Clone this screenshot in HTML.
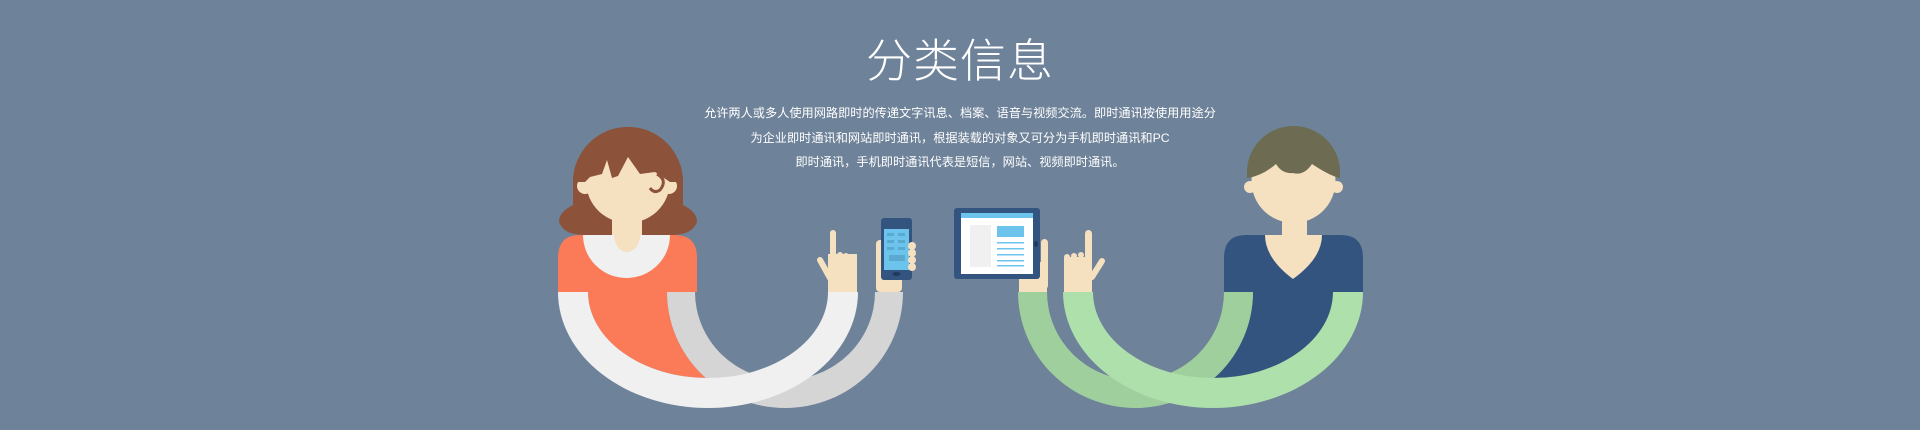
<!DOCTYPE html>
<html><head><meta charset="utf-8"><style>
html,body{margin:0;padding:0;background:#6e8299;width:1920px;height:430px;overflow:hidden}
svg{display:block}
</style></head><body>
<svg width="1920" height="430" viewBox="0 0 1920 430" xmlns="http://www.w3.org/2000/svg">
<rect width="1920" height="430" fill="#6e8299"/>
<text x="960" y="77" text-anchor="middle" font-family="'Noto Sans CJK SC',sans-serif" font-weight="300" font-size="46" fill="#fff" letter-spacing="1">分类信息</text>
<g font-family="'Liberation Sans','Noto Sans CJK SC',sans-serif" font-size="12.2" fill="#fff" text-anchor="middle">
<text x="960" y="117">允许两人或多人使用网路即时的传递文字讯息、档案、语音与视频交流。即时通讯按使用用途分</text>
<text x="960" y="142">为企业即时通讯和网站即时通讯，根据装载的对象又可分为手机即时通讯和PC</text>
<text x="960" y="166">即时通讯，手机即时通讯代表是短信，网站、视频即时通讯。</text>
</g>

<!-- WOMAN -->
<path d="M573,182 A55,55 0 0 1 683,182 L683,205 Q697,212 697,222 Q692,235 672,235 L584,235 Q564,235 559,222 Q559,212 573,205 Z" fill="#8c523a"/>
<rect x="612" y="210" width="30" height="35" fill="#f5e0bf"/>
<circle cx="585" cy="186" r="8" fill="#f5e0bf"/>
<circle cx="669" cy="186" r="8" fill="#f5e0bf"/>
<circle cx="628" cy="181" r="42" fill="#f5e0bf"/>
<path d="M573,182 A55,55 0 0 1 683,182 L670,182 L664,178 L655,172 L640,174 L628,157 L618,176 L612,178 L607,160 L602,174 L590,177 L585,182 Z" fill="#8c523a"/>
<path d="M657,174 Q668,180 660,190 Q654,194 650,188" fill="none" stroke="#8c523a" stroke-width="3"/>
<!-- torso -->
<path d="M558,292 L558,258 Q558,235 580,235 L675,235 Q697,235 697,258 L697,292 Z" fill="#fb7b58"/>
<path d="M558,292 L588,292 A120,86 0 0 0 706,378 A118,116 0 0 1 667,292 Z" fill="#fb7b58"/>
<path d="M583,235 A43.5,43 0 0 0 670,235 Z" fill="#f0f0f0"/>
<path d="M614,235 A13,17 0 0 0 640,235 Z" fill="#f5e0bf"/>
<!-- gray arm -->
<path d="M667,292 A118,116 0 0 0 903,292 L875,292 A90,88 0 0 1 695,292 Z" fill="#d5d5d5"/>
<!-- white arm -->
<path d="M558,292 A150,116 0 0 0 858,292 L828,292 A120,86 0 0 1 588,292 Z" fill="#f0f0f0"/>
<!-- hand pointing -->
<rect x="828" y="254" width="29" height="38" fill="#f5e0bf"/>
<rect x="830" y="230" width="6" height="40" rx="3" fill="#f5e0bf"/>
<circle cx="840" cy="255" r="3" fill="#f5e0bf"/><circle cx="846" cy="256" r="3" fill="#f5e0bf"/><circle cx="853" cy="257" r="3" fill="#f5e0bf"/>
<path d="M820,260 L830,278" stroke="#f5e0bf" stroke-width="6" stroke-linecap="round"/>
<!-- hand phone -->
<rect x="876" y="240" width="26" height="52" rx="4" fill="#f5e0bf"/>
<rect x="881" y="218" width="31" height="62" rx="3" fill="#32547f"/>
<rect x="884" y="229" width="25" height="41" fill="#6cc3ec"/>
<g fill="#59a9d0"><rect x="887" y="233" width="7" height="3"/><rect x="898" y="233" width="7" height="3"/><rect x="887" y="240" width="7" height="3"/><rect x="898" y="240" width="7" height="3"/><rect x="887" y="247" width="7" height="3"/><rect x="898" y="247" width="7" height="3"/><rect x="889" y="255" width="16" height="6"/></g>
<ellipse cx="896.5" cy="274" rx="4" ry="2" fill="#1f3a5c"/>
<g fill="#f5e0bf"><circle cx="912" cy="246" r="4"/><circle cx="912" cy="253" r="4"/><circle cx="912" cy="260" r="4"/><circle cx="912" cy="267" r="4"/></g>

<!-- MAN -->
<circle cx="1250" cy="187" r="6" fill="#f5e0bf"/>
<circle cx="1337" cy="187" r="6" fill="#f5e0bf"/>
<rect x="1282" y="210" width="25" height="30" fill="#f5e0bf"/>
<circle cx="1293.5" cy="181" r="42" fill="#f5e0bf"/>
<path d="M1247,178 L1247,172 A46.5,46 0 0 1 1340,172 L1340,178 Q1330,176 1312,164 Q1304,176 1293,173 Q1282,174 1276,164 Q1262,176 1247,178 Z" fill="#6d6b52"/>
<!-- torso -->
<path d="M1224,292 L1224,258 Q1224,235 1246,235 L1341,235 Q1363,235 1363,258 L1363,292 Z" fill="#32547f"/>
<path d="M1363,292 L1333,292 A120,86 0 0 1 1214,378 A117.5,116 0 0 0 1253,292 Z" fill="#32547f"/>
<path d="M1265,235 L1322,235 Q1322,258 1293,279 Q1265,258 1265,235 Z" fill="#f5e0bf"/>
<!-- back green arm -->
<path d="M1018,292 A117.5,116 0 0 0 1253,292 L1224,292 A88.5,88 0 0 1 1047,292 Z" fill="#a0cf9e"/>
<!-- front green arm -->
<path d="M1063,292 A150,116 0 0 0 1363,292 L1333,292 A120,86 0 0 1 1093,292 Z" fill="#aee0ac"/>
<!-- hand tablet -->
<rect x="1019" y="262" width="28" height="30" fill="#f5e0bf"/>
<rect x="1041" y="239" width="7" height="50" rx="3.5" fill="#f5e0bf"/>
<rect x="954" y="208" width="86" height="71" rx="3" fill="#32547f"/>
<rect x="961" y="213" width="72" height="61" fill="#fff"/>
<rect x="961" y="213" width="72" height="5" fill="#6cc3ec"/>
<rect x="970" y="225" width="21" height="42" fill="#f0f0f0"/>
<rect x="997" y="226" width="27" height="11" fill="#6cc3ec"/>
<g fill="#6cc3ec"><rect x="997" y="242" width="27" height="1.5"/><rect x="997" y="248" width="27" height="1.5"/><rect x="997" y="254" width="27" height="1.5"/><rect x="997" y="260" width="27" height="1.5"/><rect x="997" y="265" width="27" height="1.5"/></g>
<ellipse cx="1036" cy="244" rx="2" ry="3" fill="#1f3a5c"/>
<!-- pointing hand -->
<rect x="1064" y="257" width="28" height="35" fill="#f5e0bf"/>
<rect x="1085" y="230" width="7" height="40" rx="3.5" fill="#f5e0bf"/>
<circle cx="1067" cy="257" r="3" fill="#f5e0bf"/><circle cx="1074" cy="256" r="3" fill="#f5e0bf"/><circle cx="1081" cy="255" r="3" fill="#f5e0bf"/>
<path d="M1102,261 L1092,277" stroke="#f5e0bf" stroke-width="6" stroke-linecap="round"/>
</svg>
</body></html>
